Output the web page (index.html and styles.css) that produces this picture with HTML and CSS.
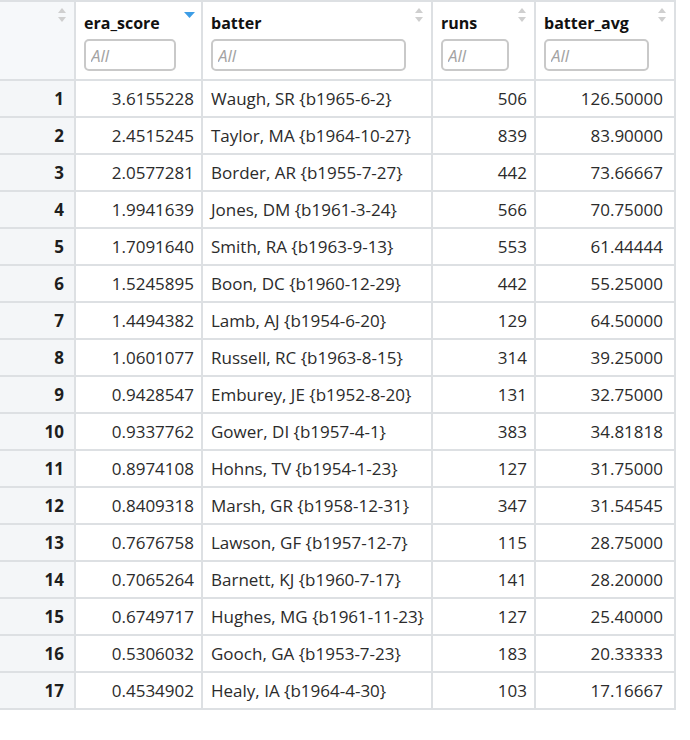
FILE: index.html
```html
<!DOCTYPE html>
<html>
<head>
<meta charset="utf-8">
<link rel="stylesheet" href="styles.css">
</head>
<body>
<table class="grid">
  <thead>
    <tr>
      <th class="c-idx corner"><span class="sort"><svg width="8" height="14" viewBox="0 0 8 14"><path d="M0 5 L4 0 L8 5 Z" fill="#cfcfcf"/><path d="M0 9 L8 9 L4 14 Z" fill="#cfcfcf"/></svg></span></th>
      <th class="c-era"><div class="label">era_score</div><input class="filter" placeholder="All"><span class="sort active"><svg width="11" height="6" viewBox="0 0 11 6"><path d="M0 0 L11 0 L5.5 6 Z" fill="#3d9de6"/></svg></span></th>
      <th class="c-bat"><div class="label">batter</div><input class="filter" placeholder="All"><span class="sort"><svg width="8" height="14" viewBox="0 0 8 14"><path d="M0 5 L4 0 L8 5 Z" fill="#cfcfcf"/><path d="M0 9 L8 9 L4 14 Z" fill="#cfcfcf"/></svg></span></th>
      <th class="c-runs"><div class="label">runs</div><input class="filter" placeholder="All"><span class="sort"><svg width="8" height="14" viewBox="0 0 8 14"><path d="M0 5 L4 0 L8 5 Z" fill="#cfcfcf"/><path d="M0 9 L8 9 L4 14 Z" fill="#cfcfcf"/></svg></span></th>
      <th class="c-avg"><div class="label">batter_avg</div><input class="filter" placeholder="All"><span class="sort"><svg width="8" height="14" viewBox="0 0 8 14"><path d="M0 5 L4 0 L8 5 Z" fill="#cfcfcf"/><path d="M0 9 L8 9 L4 14 Z" fill="#cfcfcf"/></svg></span></th>
    </tr>
  </thead>
  <tbody>
    <tr><td class="idx">1</td><td class="num">3.6155228</td><td class="txt">Waugh, SR {b1965-6-2}</td><td class="num">506</td><td class="num last">126.50000</td></tr>
    <tr><td class="idx">2</td><td class="num">2.4515245</td><td class="txt">Taylor, MA {b1964-10-27}</td><td class="num">839</td><td class="num last">83.90000</td></tr>
    <tr><td class="idx">3</td><td class="num">2.0577281</td><td class="txt">Border, AR {b1955-7-27}</td><td class="num">442</td><td class="num last">73.66667</td></tr>
    <tr><td class="idx">4</td><td class="num">1.9941639</td><td class="txt">Jones, DM {b1961-3-24}</td><td class="num">566</td><td class="num last">70.75000</td></tr>
    <tr><td class="idx">5</td><td class="num">1.7091640</td><td class="txt">Smith, RA {b1963-9-13}</td><td class="num">553</td><td class="num last">61.44444</td></tr>
    <tr><td class="idx">6</td><td class="num">1.5245895</td><td class="txt">Boon, DC {b1960-12-29}</td><td class="num">442</td><td class="num last">55.25000</td></tr>
    <tr><td class="idx">7</td><td class="num">1.4494382</td><td class="txt">Lamb, AJ {b1954-6-20}</td><td class="num">129</td><td class="num last">64.50000</td></tr>
    <tr><td class="idx">8</td><td class="num">1.0601077</td><td class="txt">Russell, RC {b1963-8-15}</td><td class="num">314</td><td class="num last">39.25000</td></tr>
    <tr><td class="idx">9</td><td class="num">0.9428547</td><td class="txt">Emburey, JE {b1952-8-20}</td><td class="num">131</td><td class="num last">32.75000</td></tr>
    <tr><td class="idx">10</td><td class="num">0.9337762</td><td class="txt">Gower, DI {b1957-4-1}</td><td class="num">383</td><td class="num last">34.81818</td></tr>
    <tr><td class="idx">11</td><td class="num">0.8974108</td><td class="txt">Hohns, TV {b1954-1-23}</td><td class="num">127</td><td class="num last">31.75000</td></tr>
    <tr><td class="idx">12</td><td class="num">0.8409318</td><td class="txt">Marsh, GR {b1958-12-31}</td><td class="num">347</td><td class="num last">31.54545</td></tr>
    <tr><td class="idx">13</td><td class="num">0.7676758</td><td class="txt">Lawson, GF {b1957-12-7}</td><td class="num">115</td><td class="num last">28.75000</td></tr>
    <tr><td class="idx">14</td><td class="num">0.7065264</td><td class="txt">Barnett, KJ {b1960-7-17}</td><td class="num">141</td><td class="num last">28.20000</td></tr>
    <tr><td class="idx">15</td><td class="num">0.6749717</td><td class="txt">Hughes, MG {b1961-11-23}</td><td class="num">127</td><td class="num last">25.40000</td></tr>
    <tr><td class="idx">16</td><td class="num">0.5306032</td><td class="txt">Gooch, GA {b1953-7-23}</td><td class="num">183</td><td class="num last">20.33333</td></tr>
    <tr><td class="idx">17</td><td class="num">0.4534902</td><td class="txt">Healy, IA {b1964-4-30}</td><td class="num">103</td><td class="num last">17.16667</td></tr>
  </tbody>
</table>
</body>
</html>
```

FILE: styles.css
```css
html, body {
  margin: 0;
  padding: 0;
  background: #ffffff;
}

.grid {
  border-collapse: separate;
  border-spacing: 0;
  table-layout: fixed;
  width: 676px;
  font-family: "Open Sans", "Noto Sans", sans-serif;
  color: #2b2b2b;
  border-top: 2px solid #dde0e3;
}

.grid th,
.grid td {
  box-sizing: border-box;
  border-right: 2px solid #dde0e3;
  border-bottom: 2px solid #dde0e3;
}

.grid th {
  position: relative;
  height: 79px;
  padding: 10px 25px 8px 8px;
  text-align: left;
  vertical-align: top;
  background: #ffffff;
}

.grid th.corner {
  background: #f6f8fa;
}

.c-idx { width: 76px; }
.c-era { width: 127px; }
.c-bat { width: 230px; }
.c-runs { width: 103px; }
.c-avg { width: 140px; }

.label {
  font-size: 16px;
  font-weight: 700;
  color: #111111;
  line-height: 22px;
  height: 22px;
  margin-bottom: 5px;
  white-space: nowrap;
}

.filter {
  display: block;
  box-sizing: border-box;
  width: 100%;
  height: 32px;
  margin: 0;
  padding: 0 5px;
  border: 2px solid #c9c9c9;
  border-radius: 5px;
  background: #ffffff;
  font-family: "Open Sans", "Noto Sans", sans-serif;
  font-size: 17px;
  outline: none;
}

.filter::placeholder {
  color: #a3a3a3;
  font-style: italic;
}

.sort {
  position: absolute;
  top: 6px;
  right: 8px;
  display: flex;
  line-height: 0;
}

.sort.active {
  top: 10px;
  right: 6px;
}

.grid td {
  height: 37px;
  padding: 0 7px 0 8px;
  font-size: 17px;
  line-height: 35px;
  white-space: nowrap;
  overflow: hidden;
}

.grid td.idx {
  background: #f4f6f8;
  text-align: right;
  font-weight: 700;
  color: #1e1e1e;
  padding-right: 10px;
}

.grid td.num {
  text-align: right;
}

.grid td.num.last {
  padding-right: 11px;
}

.grid td.txt {
  text-align: left;
}
```
